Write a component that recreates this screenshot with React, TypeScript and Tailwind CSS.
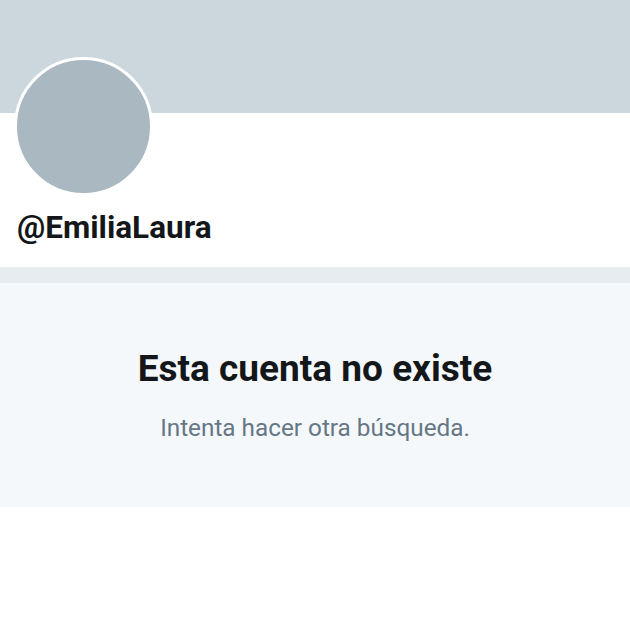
export default function App() {
  return (
    <div className="w-[630px] h-[630px] bg-white overflow-hidden" style={{ fontFamily: "Roboto, 'Liberation Sans', sans-serif" }}>
      <div className="h-[113px] bg-[#ccd6dd]" />
      <div className="px-[14px] -mt-[56px]">
        <div className="w-[139px] h-[139px] rounded-full bg-[#aab8c2] border-[3px] border-white" />
        <div className="mt-[12px] pl-[3px] text-[31.5px] leading-[40px] font-bold text-[#14171a]">@EmiliaLaura</div>
      </div>
      <div className="mt-[19px] h-[16px] bg-[#e6ecf0]" />
      <div className="h-[224px] bg-[#f5f8fa] flex flex-col items-center pt-[64px]">
        <div className="text-[37px] leading-[44px] font-bold text-[#14171a]">Esta cuenta no existe</div>
        <div className="mt-[23px] text-[24.3px] leading-[28px] text-[#657786]">Intenta hacer otra búsqueda.</div>
      </div>
    </div>
  );
}
